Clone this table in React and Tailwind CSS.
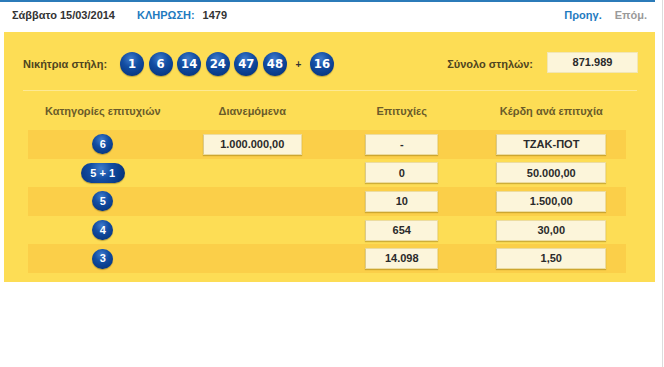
import React from "react";

const ball =
  "flex items-center justify-center rounded-full text-white font-bold bg-[radial-gradient(circle_at_45%_28%,#3f7ccd_0%,#134ea3_38%,#0a3c8a_70%,#062d68_100%)] shadow-[0_1px_1px_rgba(80,60,0,0.35)]";

function Ball({ n }) {
  return (
    <div className={`${ball} w-6 h-6 text-[13px] font-['DejaVu_Sans_Condensed','Liberation_Sans',sans-serif]`}>
      {n}
    </div>
  );
}

function Badge({ children, wide }) {
  return (
    <div
      className={`${ball} h-[20px] text-[11px] ${
        wide ? "w-[44px] rounded-[10px]" : "w-[21px]"
      }`}
    >
      {children}
    </div>
  );
}

function Box({ w, children }) {
  return (
    <div
      className={`${w} h-[21px] flex items-center justify-center bg-[#fcf5da] border border-[#ecdca0] border-l-[#d9c98c] shadow-[0_1px_1px_rgba(120,90,0,0.35)] text-[11px] font-bold text-[#2a2a2a]`}
    >
      {children}
    </div>
  );
}

const rows = [
  { cat: "6", dist: "1.000.000,00", hits: "-", win: "ΤΖΑΚ-ΠΟΤ", dark: true },
  { cat: "5 + 1", wide: true, hits: "0", win: "50.000,00" },
  { cat: "5", hits: "10", win: "1.500,00", dark: true },
  { cat: "4", hits: "654", win: "30,00" },
  { cat: "3", hits: "14.098", win: "1,50", dark: true },
];

export default function App() {
  return (
    <div className="w-[664px] h-[367px] bg-white flex font-['Liberation_Sans',Arial,sans-serif] overflow-hidden">
      <div className="w-[655px]">
        <div className="h-[2px] bg-[#2b7bb9]" />
        <div className="h-[30px] pb-[4px] flex items-center pl-[12px] pr-[8px] text-[11px] font-bold">
          <span className="text-[#333]">Σάββατο 15/03/2014</span>
          <span className="ml-[22px] text-[#1f7bbf]">ΚΛΗΡΩΣΗ:</span>
          <span className="ml-[8px] text-[#333]">1479</span>
          <span className="ml-auto text-[#1f7bbf]">Προηγ.</span>
          <span className="ml-[13px] text-[#9a9a9a]">Επόμ.</span>
        </div>
        <div className="ml-[4px] h-[250px] bg-[#fddd55] pt-[20px]">
          <div className="flex items-center h-6 pl-[19px] pr-[17px]">
            <span className="text-[11px] font-bold text-[#4e4420] w-[97px]">Νικήτρια στήλη:</span>
            <div className="flex items-center gap-[4.6px]">
              {[1, 6, 14, 24, 47, 48].map((n) => (
                <Ball key={n} n={n} />
              ))}
              <span className="text-[10px] font-bold text-[#333] mx-[4px]">+</span>
              <Ball n={16} />
            </div>
            <span className="ml-auto text-[11px] font-bold text-[#4e4420]">Σύνολο στηλών:</span>
            <div className="ml-[14px] w-[91px] h-[21px] flex items-center justify-center bg-[#fcf5da] border border-[#f2e6b5] text-[11px] font-bold text-[#2a2a2a] -mt-[3px]">
              871.989
            </div>
          </div>
          <div className="mt-[14px] ml-[19px] mr-[18px] h-px bg-[#fde994]" />
          <div className="ml-[24px] w-[598px]">
            <div className="h-[39px] grid grid-cols-4 items-center pt-[1px] text-[11px] font-bold text-[#6a5b2a] text-center">
              <span>Κατηγορίες επιτυχιών</span>
              <span>Διανεμόμενα</span>
              <span>Επιτυχίες</span>
              <span>Κέρδη ανά επιτυχία</span>
            </div>
            {rows.map((r, i) => (
              <div
                key={i}
                className={`h-[28.6px] grid grid-cols-4 items-center ${
                  r.dark ? "bg-[#fbcf49]" : ""
                }`}
              >
                <div className="flex justify-center">
                  <Badge wide={r.wide}>{r.cat}</Badge>
                </div>
                <div className="flex justify-center">
                  {r.dist && <Box w="w-[99px]">{r.dist}</Box>}
                </div>
                <div className="flex justify-center">
                  <Box w="w-[73px]">{r.hits}</Box>
                </div>
                <div className="flex justify-center">
                  <Box w="w-[110px]">{r.win}</Box>
                </div>
              </div>
            ))}
          </div>
        </div>
      </div>
      <div className="ml-[7px] w-px bg-[#dcdcdc]" />
    </div>
  );
}
